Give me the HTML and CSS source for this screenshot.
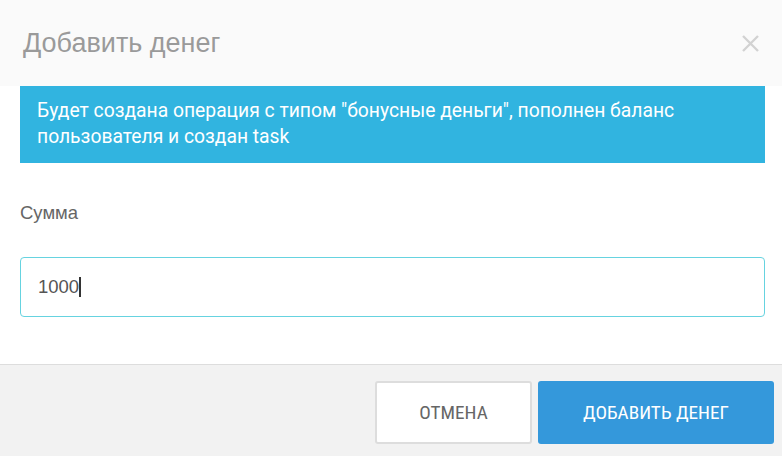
FILE: index.html
```html
<!DOCTYPE html>
<html lang="ru">

<head>
    <meta name="viewport" content="width=device-width, initial-scale=1.0" />
    <title>Добавить денег</title>
    <link rel="stylesheet" href="styles.css">
</head>

<body>
    <div class="modal">
        <div class="modal-header">
            <h4 class="modal-title">Добавить денег</h4>
            <button class="close" type="button">
                <svg width="17" height="17" viewBox="0 0 17 17">
                    <path d="M1 1L16 16M16 1L1 16" stroke="#d2d2d2" stroke-width="2.4" fill="none" />
                </svg>
            </button>
        </div>
        <div class="modal-body">
            <div class="alert">Будет создана операция с типом "бонусные деньги", пополнен баланс пользователя и создан task</div>
            <label class="label" for="amount">Сумма</label>
            <div class="input">1000<span class="caret"></span></div>
        </div>
        <div class="modal-footer">
            <button class="btn btn-default" type="button">Отмена</button>
            <button class="btn btn-primary" type="button">Добавить денег</button>
        </div>
    </div>
</body>

</html>
```

FILE: styles.css
```css
* {
    padding: 0;
    margin: 0;
    box-sizing: border-box;
    font-family: "Liberation Sans", Arial, sans-serif;
}

body {
    background-color: #ffffff;
    width: 782px;
    height: 456px;
    overflow: hidden;
}

.modal {
    display: flex;
    flex-direction: column;
    height: 456px;
}

.modal-header {
    height: 86px;
    background-color: #fafafa;
    display: flex;
    align-items: center;
    justify-content: space-between;
    padding: 0 23px 0 23px;
}

.modal-title {
    font-size: 27px;
    font-weight: normal;
    color: #9a9a9a;
}

.close {
    background: none;
    border: 0;
    width: 17px;
    height: 17px;
    display: flex;
}

.modal-body {
    padding: 0 17px 0 20px;
    flex: 1;
    border-bottom: 1px solid #dddddd;
}

.alert {
    background-color: #31b4e0;
    color: #ffffff;
    font-family: Roboto, sans-serif;
    font-size: 19.3px;
    line-height: 26px;
    padding: 12px 17px 13px;
    height: 77px;
}

.label {
    display: block;
    margin-top: 39px;
    font-size: 18.5px;
    color: #666666;
}

.input {
    margin-top: 33px;
    height: 60px;
    border: 1px solid #66d3e0;
    border-radius: 4px;
    padding: 0 17px;
    display: flex;
    align-items: center;
    font-size: 18.5px;
    color: #555555;
}

.caret {
    display: inline-block;
    width: 2px;
    height: 20px;
    background-color: #333333;
    margin-left: 0;
}

.modal-footer {
    background-color: #f2f2f2;
    height: 91px;
    display: flex;
    justify-content: flex-end;
    gap: 6px;
    padding: 16px 8px 0 0;
}

.btn {
    height: 63px;
    border-radius: 3px;
    font-family: Roboto, sans-serif;
    font-stretch: condensed;
    font-size: 19.2px;
    text-transform: uppercase;
    cursor: pointer;
}

.btn-default {
    width: 157px;
    background-color: #ffffff;
    border: 2px solid #dddddd;
    color: #666666;
}

.btn-primary {
    width: 236px;
    background-color: #3498db;
    border: 0;
    color: #ffffff;
}
```
